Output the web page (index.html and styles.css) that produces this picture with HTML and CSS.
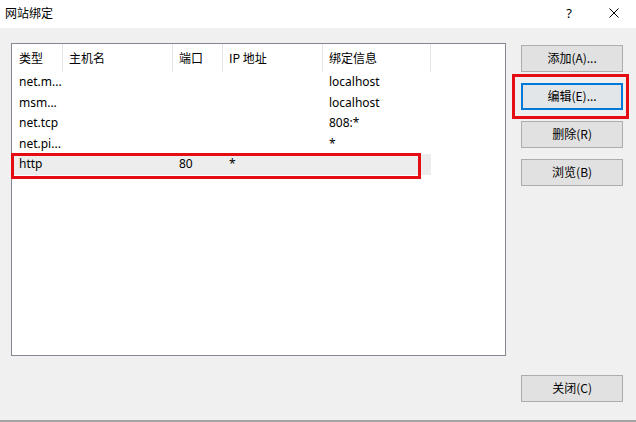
FILE: index.html
```html
<!DOCTYPE html>
<html lang="zh-CN">
<head>
<meta charset="utf-8">
<title>网站绑定</title>
<link rel="stylesheet" href="styles.css">
</head>
<body>
<div class="window">
  <div class="titlebar">
    <div class="title">网站绑定</div>
    <div class="tb-btn help">?</div>
    <div class="tb-btn close-x">
      <svg width="10" height="10" viewBox="0 0 10 10"><path d="M0.5 0.5 L9.5 9.5 M9.5 0.5 L0.5 9.5" stroke="#000" stroke-width="1" fill="none"/></svg>
    </div>
  </div>
  <div class="content">
    <div class="list">
      <div class="row header">
        <div class="cell">类型</div>
        <div class="cell">主机名</div>
        <div class="cell">端口</div>
        <div class="cell">IP 地址</div>
        <div class="cell">绑定信息</div>
      </div>
      <div class="row item">
        <div class="cell">net.m...</div><div class="cell"></div><div class="cell"></div><div class="cell"></div><div class="cell">localhost</div>
      </div>
      <div class="row item">
        <div class="cell">msm...</div><div class="cell"></div><div class="cell"></div><div class="cell"></div><div class="cell">localhost</div>
      </div>
      <div class="row item">
        <div class="cell">net.tcp</div><div class="cell"></div><div class="cell"></div><div class="cell"></div><div class="cell">808:*</div>
      </div>
      <div class="row item">
        <div class="cell">net.pi...</div><div class="cell"></div><div class="cell"></div><div class="cell"></div><div class="cell">*</div>
      </div>
      <div class="row item selected">
        <div class="cell">http</div><div class="cell"></div><div class="cell">80</div><div class="cell">*</div><div class="cell"></div>
        <div class="mark mark-row"></div>
      </div>
    </div>
    <div class="side">
      <div class="btn">添加(A)...</div>
      <div class="btn-wrap">
        <div class="btn focused">编辑(E)...</div>
        <div class="mark mark-btn"></div>
      </div>
      <div class="btn">删除(R)</div>
      <div class="btn">浏览(B)</div>
      <div class="btn close">关闭(C)</div>
    </div>
  </div>
</div>
</body>
</html>
```
FILE: styles.css
```css
* { box-sizing: border-box; }
html, body { margin: 0; padding: 0; }
body {
  font-family: "Noto Sans", "Noto Sans CJK SC", sans-serif;
  font-size: 12px;
  color: #000;
  background: #f0f0f0;
}
.window {
  width: 636px;
  height: 422px;
  display: flex;
  flex-direction: column;
  background: #f0f0f0;
  border-bottom: 2px solid #a3a3a3;
}
.titlebar {
  height: 28px;
  background: #fff;
  display: flex;
  align-items: center;
}
.title {
  flex: 1;
  padding-left: 5px;
  font-family: "Noto Sans CJK SC", sans-serif;
  font-size: 12px;
  line-height: 16px;
  margin-top: -2px;
}
.tb-btn {
  width: 45px;
  height: 28px;
  display: flex;
  align-items: center;
  justify-content: center;
}
.help { font-size: 13px; width: 46px; margin-top: -2px; }
.close-x { width: 44px; margin-top: -3px; }
.content {
  flex: 1;
  display: flex;
  padding: 15px 13px 18px 11px;
  gap: 15px;
}
.list {
  width: 496px;
  height: 313px;
  border: 1px solid #828790;
  background: #fff;
}
.row {
  display: grid;
  grid-template-columns: 51px 110px 50px 100px 108px;
  width: 419px;
  position: relative;
}
.header { height: 28px; }
.header .cell {
  border-right: 1px solid #e5e5e5;
  display: flex;
  align-items: center;
  padding-bottom: 1px;
  font-family: "Noto Sans CJK SC", sans-serif;
}
.cell {
  padding-left: 6px;
  white-space: nowrap;
  overflow: hidden;
}
.cell:first-child { padding-left: 7px; }
.item { height: 20.5px; }
.item .cell {
  display: flex;
  align-items: center;
  line-height: 16px;
}
.selected { background: #ededed; }
.mark {
  position: absolute;
  border: 3px solid #e50d14;
  pointer-events: none;
}
.mark-row {
  left: -1px;
  top: -1.5px;
  width: 410px;
  height: 26px;
}
.side {
  width: 102px;
  display: flex;
  flex-direction: column;
  gap: 11px;
  padding-top: 2px;
}
.btn {
  height: 27px;
  background: #e1e1e1;
  border: 1px solid #adadad;
  display: flex;
  align-items: center;
  justify-content: center;
  font-family: "Noto Sans CJK SC", sans-serif;
  font-size: 12px;
  line-height: 16px;
  padding-bottom: 1px;
}
.btn-wrap { position: relative; }
.btn.focused {
  border: 2px solid #0078d7;
  background: #e3e6e9;
}
.mark-btn {
  left: -9px;
  top: -9px;
  width: 117px;
  height: 45px;
}
.close { margin-top: auto; }
```
